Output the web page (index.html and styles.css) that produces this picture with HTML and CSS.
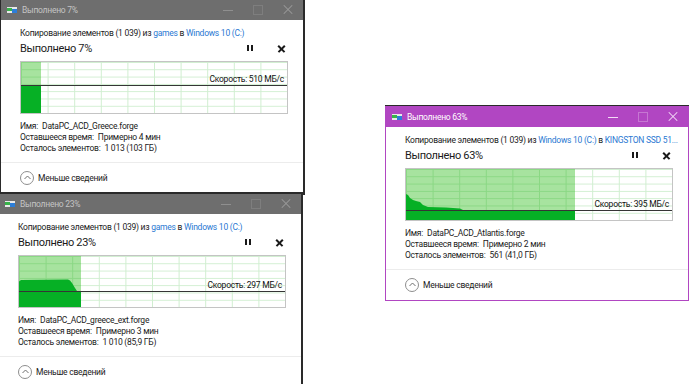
FILE: index.html
```html
<!DOCTYPE html>
<html lang="ru">
<head>
    <meta charset="utf-8">
    <title>Копирование элементов</title>
    <link rel="stylesheet" href="styles.css">
</head>
<body>
<div class="desktop">

    <!-- окно 1 -->
    <div class="win win-gray win-a">
        <div class="titlebar">
            <svg class="app-icon" width="10" height="8" viewBox="0 0 10 8"><rect x="0" y="1" width="10" height="6" fill="#e9e9e9"/><rect x="0" y="2" width="5" height="3" fill="#37b34a"/><rect x="5" y="3" width="5" height="4" fill="#2d7ed8"/></svg>
            <span class="title-text">Выполнено 7%</span>
            <div class="controls">
                <span class="ctl ctl-min"></span>
                <span class="ctl ctl-max"></span>
                <span class="ctl ctl-close"></span>
            </div>
        </div>
        <div class="win-body">
            <div class="copy-line">Копирование элементов (1 039) из <span class="link">games</span> в <span class="link">Windows 10 (C:)</span></div>
            <div class="status">
                <span class="status-text">Выполнено 7%</span>
                <span class="btn-pause"></span>
                <span class="btn-stop"></span>
            </div>
            <div class="graph">
                <svg width="266" height="51" viewBox="0 0 266 51">
                    <defs>
                        <pattern id="gridA" width="26.6" height="7.3" patternUnits="userSpaceOnUse">
                            <path d="M0.5 0 V7.3 M0 0.5 H26.6" stroke="rgba(20,170,20,0.2)" stroke-width="1" fill="none"/>
                        </pattern>
                    </defs>
                    <rect x="0" y="0" width="20" height="51" fill="#a7e39f"/>
                    <rect x="0" y="0" width="266" height="51" fill="url(#gridA)"/>
                    <rect x="0" y="24" width="20" height="27" fill="#06b025"/>
                    <path d="M0 23.5 H266" stroke="#353535" stroke-width="1"/>
                </svg>
                <span class="speed" style="top: 12px">Скорость: 510 МБ/с</span>
            </div>
            <div class="info">
                <div>Имя:<span class="val">DataPC_ACD_Greece.forge</span></div>
                <div>Оставшееся время:<span class="val">Примерно 4 мин</span></div>
                <div>Осталось элементов:<span class="val">1 013 (103 ГБ)</span></div>
            </div>
        </div>
        <div class="footer">
            <span class="less-icon"><svg width="7" height="5" viewBox="0 0 7 5"><path d="M0.5 4 L3.5 1 L6.5 4" stroke="#6f6f6f" stroke-width="1" fill="none"/></svg></span>
            <span>Меньше сведений</span>
        </div>
    </div>

    <!-- окно 2 -->
    <div class="win win-gray win-b">
        <div class="titlebar">
            <svg class="app-icon" width="10" height="8" viewBox="0 0 10 8"><rect x="0" y="1" width="10" height="6" fill="#e9e9e9"/><rect x="0" y="2" width="5" height="3" fill="#37b34a"/><rect x="5" y="3" width="5" height="4" fill="#2d7ed8"/></svg>
            <span class="title-text">Выполнено 23%</span>
            <div class="controls">
                <span class="ctl ctl-min"></span>
                <span class="ctl ctl-max"></span>
                <span class="ctl ctl-close"></span>
            </div>
        </div>
        <div class="win-body">
            <div class="copy-line">Копирование элементов (1 039) из <span class="link">games</span> в <span class="link">Windows 10 (C:)</span></div>
            <div class="status">
                <span class="status-text">Выполнено 23%</span>
                <span class="btn-pause"></span>
                <span class="btn-stop"></span>
            </div>
            <div class="graph">
                <svg width="266" height="51" viewBox="0 0 266 51">
                    <defs>
                        <pattern id="gridB" width="26.6" height="7.3" patternUnits="userSpaceOnUse">
                            <path d="M0.5 0 V7.3 M0 0.5 H26.6" stroke="rgba(20,170,20,0.2)" stroke-width="1" fill="none"/>
                        </pattern>
                    </defs>
                    <rect x="0" y="0" width="62" height="51" fill="#a7e39f"/>
                    <rect x="0" y="0" width="266" height="51" fill="url(#gridB)"/>
                    <path d="M0 51 V25.5 L2 24 L49 23.5 L51 24.5 L53 27 L56 32 L58 35 L62 35 V51 Z" fill="#06b025"/>
                    <path d="M0 35.5 H266" stroke="#353535" stroke-width="1"/>
                </svg>
                <span class="speed" style="top: 24px">Скорость: 297 МБ/с</span>
            </div>
            <div class="info">
                <div>Имя:<span class="val">DataPC_ACD_greece_ext.forge</span></div>
                <div>Оставшееся время:<span class="val">Примерно 3 мин</span></div>
                <div>Осталось элементов:<span class="val">1 010 (85,9 ГБ)</span></div>
            </div>
        </div>
        <div class="footer">
            <span class="less-icon"><svg width="7" height="5" viewBox="0 0 7 5"><path d="M0.5 4 L3.5 1 L6.5 4" stroke="#6f6f6f" stroke-width="1" fill="none"/></svg></span>
            <span>Меньше сведений</span>
        </div>
    </div>

    <!-- окно 3, активное -->
    <div class="win win-purple win-c">
        <div class="titlebar">
            <svg class="app-icon" width="10" height="8" viewBox="0 0 10 8"><rect x="0" y="1" width="10" height="6" fill="#e9e9e9"/><rect x="0" y="2" width="5" height="3" fill="#37b34a"/><rect x="5" y="3" width="5" height="4" fill="#2d7ed8"/></svg>
            <span class="title-text">Выполнено 63%</span>
            <div class="controls">
                <span class="ctl ctl-min"></span>
                <span class="ctl ctl-max"></span>
                <span class="ctl ctl-close"></span>
            </div>
        </div>
        <div class="win-body">
            <div class="copy-line">Копирование элементов (1 039) из <span class="link">Windows 10 (C:)</span> в <span class="link">KINGSTON SSD 51...</span></div>
            <div class="status">
                <span class="status-text">Выполнено 63%</span>
                <span class="btn-pause"></span>
                <span class="btn-stop"></span>
            </div>
            <div class="graph">
                <svg width="266" height="51" viewBox="0 0 266 51">
                    <defs>
                        <pattern id="gridC" width="26.6" height="7.3" patternUnits="userSpaceOnUse">
                            <path d="M0.5 0 V7.3 M0 0.5 H26.6" stroke="rgba(20,170,20,0.2)" stroke-width="1" fill="none"/>
                        </pattern>
                    </defs>
                    <rect x="0" y="0" width="169" height="51" fill="#a7e39f"/>
                    <rect x="0" y="0" width="266" height="51" fill="url(#gridC)"/>
                    <path d="M0 51 V25 L2 26 L4 29 L7 31 L10 32 L14 33 L17 36 L22 38 L40 38.5 L54 39.5 L58 41.5 L169 41.5 V51 Z" fill="#06b025"/>
                    <path d="M0 41.5 H266" stroke="#353535" stroke-width="1"/>
                </svg>
                <span class="speed" style="top: 30px">Скорость: 395 МБ/с</span>
            </div>
            <div class="info">
                <div>Имя:<span class="val">DataPC_ACD_Atlantis.forge</span></div>
                <div>Оставшееся время:<span class="val">Примерно 2 мин</span></div>
                <div>Осталось элементов:<span class="val">561 (41,0 ГБ)</span></div>
            </div>
        </div>
        <div class="footer">
            <span class="less-icon"><svg width="7" height="5" viewBox="0 0 7 5"><path d="M0.5 4 L3.5 1 L6.5 4" stroke="#6f6f6f" stroke-width="1" fill="none"/></svg></span>
            <span>Меньше сведений</span>
        </div>
    </div>

</div>
</body>
</html>
```

FILE: styles.css
```css
body {
    margin: 0;
    padding: 0;
    background-color: #fff;
    font-family: Roboto, "Noto Sans", sans-serif;
    color: #1b1b1b;
}

.desktop {
    position: relative;
    width: 700px;
    height: 384px;
    overflow: hidden;
    background-color: #fff;
}

/* окна */
.win {
    position: absolute;
    width: 304px;
    height: 195px;
    box-sizing: border-box;
    border: 1px solid #2a2a2a;
    background-color: #fff;
    display: flex;
    flex-direction: column;
    font-size: 8.5px;
    letter-spacing: -0.25px;
}
.win-gray {
    box-shadow: 0 0 0 1px #2a2a2a;
}
.win-a {
    left: 0;
    top: -1px;
}
.win-b {
    left: -2px;
    top: 193px;
}
.win-c {
    left: 385px;
    top: 106px;
    border-color: #b146c2;
    box-shadow: 0 -1px 0 #2a2a2a;
}

/* заголовок окна */
.titlebar {
    height: 20px;
    flex-shrink: 0;
    display: flex;
    align-items: center;
    background-color: #6e6e6e;
    color: #c4c4c4;
}
.win-purple .titlebar {
    background-color: #b146c2;
    color: #fff;
}
.app-icon {
    margin-left: 6px;
    margin-right: 5px;
}
.title-text {
    flex: 1;
}
.controls {
    display: flex;
    height: 100%;
}
.ctl {
    position: relative;
    width: 30px;
    height: 100%;
}
.ctl-min::before {
    content: "";
    position: absolute;
    left: 10px;
    top: 10px;
    width: 10px;
    height: 1px;
    background-color: #8f8f8f;
}
.ctl-max::before {
    content: "";
    position: absolute;
    left: 10px;
    top: 5px;
    width: 8px;
    height: 8px;
    border: 1px solid #7e7e7e;
}
.ctl-close::before,
.ctl-close::after {
    content: "";
    position: absolute;
    left: 9px;
    top: 9px;
    width: 12px;
    height: 1px;
    background-color: #9a9a9a;
    transform: rotate(45deg);
}
.ctl-close::after {
    transform: rotate(-45deg);
}
.win-purple .ctl-min::before,
.win-purple .ctl-close::before,
.win-purple .ctl-close::after {
    background-color: #f3dcf6;
}
.win-purple .ctl-max::before {
    border-color: #c677d2;
}

/* содержимое */
.win-body {
    padding: 7px 15px 0 19px;
    flex: 1;
}
.copy-line {
    line-height: 13px;
    height: 13px;
    white-space: nowrap;
}
.link {
    color: #2a78d2;
}
.status {
    display: flex;
    align-items: center;
    height: 16px;
}
.status-text {
    flex: 1;
    font-size: 11px;
    letter-spacing: -0.35px;
}
.btn-pause {
    width: 2px;
    height: 6px;
    border-left: 2px solid #1a1a1a;
    border-right: 2px solid #1a1a1a;
    margin-right: 25px;
}
.btn-stop {
    position: relative;
    width: 7px;
    height: 7px;
    margin-right: 3px;
}
.btn-stop::before,
.btn-stop::after {
    content: "";
    position: absolute;
    left: -1px;
    top: 3px;
    width: 9px;
    height: 1.6px;
    background-color: #1a1a1a;
    transform: rotate(45deg);
}
.btn-stop::after {
    transform: rotate(-45deg);
}

.graph {
    position: relative;
    margin-top: 5px;
    width: 268px;
    height: 53px;
    box-sizing: border-box;
    border: 1px solid #c4c4c4;
}
.graph svg {
    display: block;
}
.speed {
    position: absolute;
    right: 3px;
    line-height: 11px;
    color: #111;
}

.info {
    margin-top: 7px;
    line-height: 11px;
}
.val {
    margin-left: 4px;
}

.footer {
    height: 30px;
    flex-shrink: 0;
    border-top: 1px solid #ececec;
    display: flex;
    align-items: center;
    padding-left: 19px;
}
.less-icon {
    width: 12px;
    height: 12px;
    border: 1px solid #8e8e8e;
    border-radius: 50%;
    display: flex;
    align-items: center;
    justify-content: center;
    margin-right: 4px;
}
.less-icon svg {
    display: block;
    margin-top: -1px;
}
```
